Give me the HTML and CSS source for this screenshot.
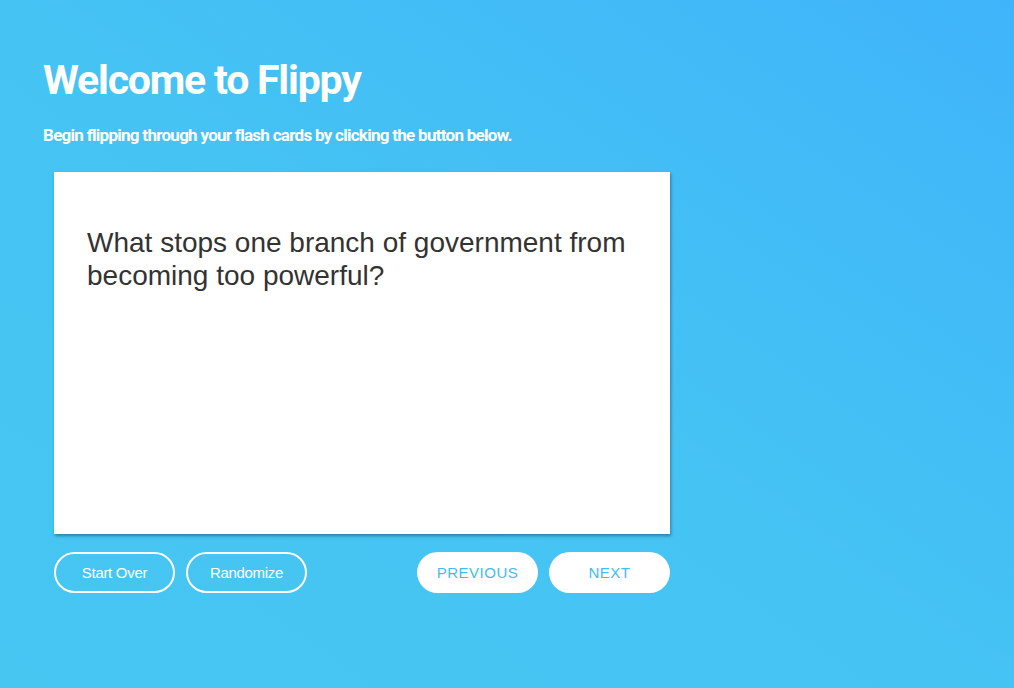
FILE: index.html
```html
<!DOCTYPE html>
<html>
<head>
<meta charset="utf-8">
<title>Flippy</title>
<link rel="stylesheet" href="styles.css">
</head>
<body>
<main class="page">
  <header class="intro">
    <h1 class="title">Welcome to Flippy</h1>
    <p class="subtitle">Begin flipping through your flash cards by clicking the button below.</p>
  </header>
  <section class="deck">
    <div class="card">
      <p class="question">What stops one branch of government from becoming too powerful?</p>
    </div>
    <div class="controls">
      <div class="group">
        <button class="btn btn-outline">Start Over</button>
        <button class="btn btn-outline">Randomize</button>
      </div>
      <div class="group">
        <button class="btn btn-solid">PREVIOUS</button>
        <button class="btn btn-solid">NEXT</button>
      </div>
    </div>
  </section>
</main>
</body>
</html>
```
FILE: styles.css
```css
* { box-sizing: border-box; }
html, body { margin: 0; height: 100%; }
body {
  background: linear-gradient(35deg, #47c6f2 0%, #45c3f3 50%, #3fb4fa 100%);
  font-family: "Liberation Sans", Arial, sans-serif;
}
.page {
  padding: 52px 43px 0 43px;
}
.title {
  margin: 0;
  font-family: Roboto, sans-serif;
  font-weight: 700;
  font-size: 41px;
  line-height: 56px;
  color: #fff;
  letter-spacing: -1.2px;
}
.subtitle {
  margin: 16px 0 0 0;
  font-family: Roboto, sans-serif;
  font-weight: 700;
  font-size: 17px;
  line-height: 22px;
  color: #fff;
  letter-spacing: -0.72px;
}
.deck {
  margin: 26px 0 0 11px;
  width: 616px;
}
.card {
  background: #fff;
  height: 362px;
  padding: 54px 33px;
  box-shadow: 1px 2px 3px rgba(0, 0, 0, 0.35);
}
.question {
  margin: 0;
  font-size: 28px;
  line-height: 33px;
  color: #333;
}
.controls {
  margin-top: 18px;
  display: flex;
  justify-content: space-between;
}
.group {
  display: flex;
  gap: 11px;
}
.btn {
  width: 121px;
  height: 41px;
  border-radius: 21px;
  font-family: "Liberation Sans", Arial, sans-serif;
  font-size: 15px;
  cursor: pointer;
  padding: 0;
}
.btn-outline {
  background: transparent;
  border: 2px solid #fff;
  color: #fff;
  letter-spacing: -0.3px;
}
.btn-solid {
  background: #fff;
  border: none;
  color: #42bcef;
  letter-spacing: 0.5px;
}
```
